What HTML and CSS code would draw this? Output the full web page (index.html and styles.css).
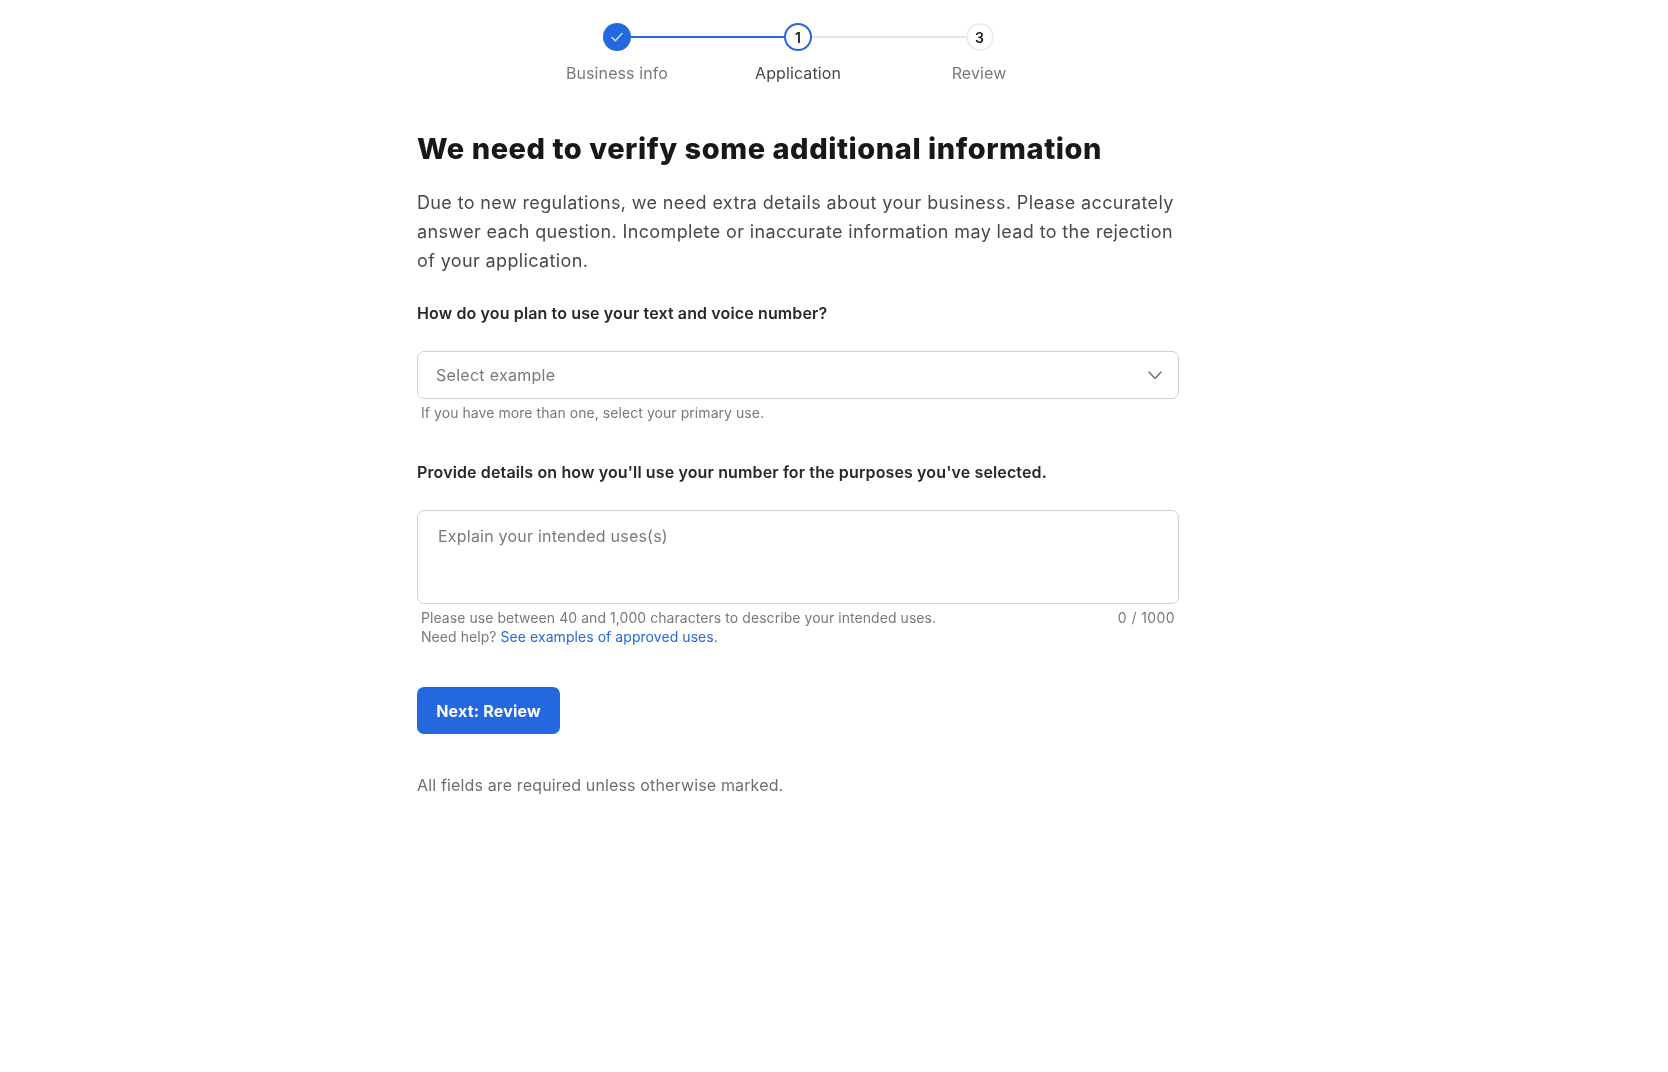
FILE: index.html
```html
<!DOCTYPE html>
<html lang="en">
<head>
<meta charset="utf-8">
<title>We need to verify some additional information</title>
<link rel="stylesheet" href="styles.css">
</head>
<body>
<main class="page">
  <nav class="stepper">
    <div class="track">
      <span class="node node-done">
        <svg width="16" height="16" viewBox="0 0 16 16" fill="none"><path d="M3 8.5l3.2 3.2L13 4.5" stroke="#c6d9f8" stroke-width="1.6" stroke-linecap="round" stroke-linejoin="round"/></svg>
      </span>
      <span class="line line-done"></span>
      <span class="node node-current">1</span>
      <span class="line"></span>
      <span class="node node-next">3</span>
    </div>
    <div class="step-labels">
      <span class="step-label">Business info</span>
      <span class="step-label step-label-current">Application</span>
      <span class="step-label">Review</span>
    </div>
  </nav>

  <h1 class="title">We need to verify some additional information</h1>
  <p class="intro">Due to new regulations, we need extra details about your business. Please accurately answer each question. Incomplete or inaccurate information may lead to the rejection of your application.</p>

  <section class="field field-select">
    <div class="field-label">How do you plan to use your text and voice number?</div>
    <div class="select">
      <span>Select example</span>
      <svg width="16" height="16" viewBox="0 0 16 16" fill="none"><path d="M2 5l6 6.5L14 5" stroke="#6f7377" stroke-width="1.5" stroke-linecap="round" stroke-linejoin="round"/></svg>
    </div>
    <div class="hint">If you have more than one, select your primary use.</div>
  </section>

  <section class="field field-area">
    <div class="field-label">Provide details on how you'll use your number for the purposes you've selected.</div>
    <div class="textarea">Explain your intended uses(s)</div>
    <div class="hint hint-row">
      <div>Please use between 40 and 1,000 characters to describe your intended uses.<br>Need help? <a class="link" href="#">See examples of approved uses.</a></div>
      <div class="counter">0 / 1000</div>
    </div>
  </section>

  <button class="primary" type="button">Next: Review</button>
  <p class="footnote">All fields are required unless otherwise marked.</p>
</main>
</body>
</html>
```
FILE: styles.css
```css
* { box-sizing: border-box; }
html, body { margin: 0; padding: 0; background: #fff; }
body { font-family: "Inter", "Liberation Sans", sans-serif; color: #1b1c1e; }

.page {
  width: 762px;
  margin-left: 417px;
  padding-top: 23px;
  filter: blur(0.6px);
}

.stepper { width: 543px; margin: 0 auto; }
.track { display: flex; align-items: center; padding: 0 76px; height: 28px; }
.node {
  flex: none;
  width: 28px;
  height: 28px;
  border-radius: 50%;
  display: flex;
  align-items: center;
  justify-content: center;
  font-size: 14px;
  font-weight: 600;
  background: #fff;
  color: #1b1c1e;
}
.node-done { background: #2468e0; }
.node-current { border: 2px solid #2468e0; }
.node-next { border: 2px solid #ededed; }
.line { flex: 1; height: 2px; background: #e4e4e4; }
.line-done { background: #2468e0; }
.step-labels { display: grid; grid-template-columns: repeat(3, 1fr); margin-top: 12px; }
.step-label { text-align: center; font-size: 16px; letter-spacing: 0.1px; line-height: 20px; color: #77797c; }
.step-label-current { color: #47494c; }

.title {
  margin: 46px 0 0;
  font-size: 29px;
  line-height: 40px;
  font-weight: 800;
  letter-spacing: 0.55px;
  color: #17181a;
}
.intro {
  margin: 19px 0 0;
  font-size: 18px;
  letter-spacing: 0.37px;
  line-height: 29px;
  color: #47494c;
}

.field-select { margin-top: 28px; }
.field-area { margin-top: 40px; }
.field-label { font-size: 16px; letter-spacing: 0.13px; line-height: 20px; font-weight: 600; color: #26282a; }
.select {
  margin-top: 28px;
  height: 48px;
  padding: 0 15px 0 18px;
  border: 1px solid #cfd0d2;
  border-radius: 7px;
  display: flex;
  align-items: center;
  justify-content: space-between;
  font-size: 16px;
  letter-spacing: 0.28px;
  color: #77797c;
}
.textarea {
  margin-top: 28px;
  height: 94px;
  padding: 14px 20px;
  border: 1px solid #cfd0d2;
  border-radius: 7px;
  font-size: 16px;
  letter-spacing: 0.22px;
  line-height: 22px;
  color: #77797c;
}
.hint {
  margin-top: 4px;
  padding: 0 4px;
  font-size: 14px;
  letter-spacing: 0.06px;
  line-height: 19px;
  color: #77797c;
}
.hint-row { display: flex; justify-content: space-between; }
.counter { letter-spacing: 0.4px; }
.link { color: #2468e0; text-decoration: none; }

.primary {
  display: block;
  margin-top: 41px;
  width: 143px;
  height: 47px;
  border: 0;
  border-radius: 7px;
  background: #2468e0;
  color: #fff;
  font-family: inherit;
  font-size: 16px;
  letter-spacing: 0.2px;
  font-weight: 700;
}
.footnote {
  margin: 41px 0 0;
  font-size: 16px;
  letter-spacing: 0.15px;
  line-height: 20px;
  color: #6c6e71;
}
```
